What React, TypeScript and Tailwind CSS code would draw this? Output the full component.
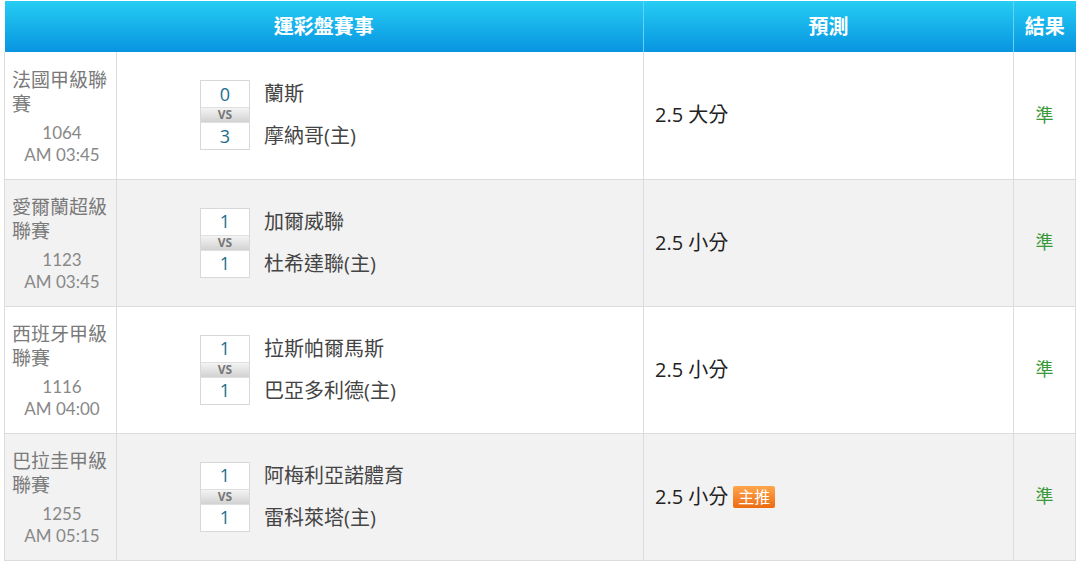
const rows = [
  { league: "法國甲級聯賽", no: "1064", time: "AM 03:45", s1: "0", s2: "3", t1: "蘭斯", t2: "摩納哥(主)", pick: "2.5 大分", hot: false, res: "準" },
  { league: "愛爾蘭超級聯賽", no: "1123", time: "AM 03:45", s1: "1", s2: "1", t1: "加爾威聯", t2: "杜希達聯(主)", pick: "2.5 小分", hot: false, res: "準" },
  { league: "西班牙甲級聯賽", no: "1116", time: "AM 04:00", s1: "1", s2: "1", t1: "拉斯帕爾馬斯", t2: "巴亞多利德(主)", pick: "2.5 小分", hot: false, res: "準" },
  { league: "巴拉圭甲級聯賽", no: "1255", time: "AM 05:15", s1: "1", s2: "1", t1: "阿梅利亞諾體育", t2: "雷科萊塔(主)", pick: "2.5 小分", hot: true, res: "準" },
];

const font = { fontFamily: '"Open Sans", "Noto Sans CJK TC", sans-serif' };
const numFont = { fontFamily: 'Lato, "Noto Sans CJK TC", sans-serif' };

export default function App() {
  return (
    <div className="w-[1080px] h-[563px] bg-white pt-[1px] pl-[4px]" style={font}>
      <table className="w-[1071px] border-collapse table-fixed">
        <colgroup>
          <col className="w-[112px]" />
          <col className="w-[527px]" />
          <col className="w-[370px]" />
          <col className="w-[62px]" />
        </colgroup>
        <thead>
          <tr className="h-[51px] bg-gradient-to-b from-[#26cdf3] to-[#0994e0] text-white text-[20px] font-bold">
            <th colSpan={2} className="border-r border-[#63d3f3]">運彩盤賽事</th>
            <th className="border-r border-[#63d3f3]">預測</th>
            <th>結果</th>
          </tr>
        </thead>
        <tbody>
          {rows.map((r, i) => (
            <tr key={i} className={`h-[127px] border-b border-[#dcdcdc] ${i % 2 ? "bg-[#f2f2f2]" : "bg-white"}`}>
              <td className="border-l border-r border-[#dcdcdc] align-middle pl-[7px] pr-[4px] pt-[3px] text-[#7a7a7a]">
                <div className="text-[19px] leading-[24px]">{r.league}</div>
                <div className="mt-[6px] text-center text-[17px] leading-[22px] text-[#888]" style={numFont}>{r.no}</div>
                <div className="text-center text-[17px] leading-[22px] text-[#888]" style={numFont}>{r.time}</div>
              </td>
              <td className="border-r border-[#dcdcdc] align-middle pl-[83px]">
                <div className="flex items-center gap-[14px]">
                  <div className="w-[50px] flex flex-col border border-[#d8d8d8] bg-white">
                    <div className="h-[26px] flex items-center justify-center text-[#1d6e8c] text-[18px]">{r.s1}</div>
                    <div className="h-[16px] flex items-center justify-center bg-gradient-to-b from-[#f4f4f4] to-[#d2d2d2] text-[#777] text-[12px] font-bold leading-none border-y border-[#e0e0e0]">VS</div>
                    <div className="h-[26px] flex items-center justify-center text-[#1d6e8c] text-[18px]">{r.s2}</div>
                  </div>
                  <div className="flex flex-col justify-between h-[72px] text-[20px] text-[#444] leading-[30px]">
                    <div>{r.t1}</div>
                    <div>{r.t2}</div>
                  </div>
                </div>
              </td>
              <td className="border-r border-[#dcdcdc] align-middle pl-[11px] text-[20px] text-[#222]">
                <div className="flex items-center gap-[5px]">
                  <span>{r.pick}</span>
                  {r.hot && (
                    <span className="inline-flex items-center h-[22px] px-[5px] rounded-[2px] bg-gradient-to-b from-[#ffa64a] to-[#ec6a0c] text-white text-[16px] leading-none">主推</span>
                  )}
                </div>
              </td>
              <td className="border-r border-[#dcdcdc] align-middle text-center text-[18px] text-[#3a9a3a]">{r.res}</td>
            </tr>
          ))}
        </tbody>
      </table>
    </div>
  );
}
